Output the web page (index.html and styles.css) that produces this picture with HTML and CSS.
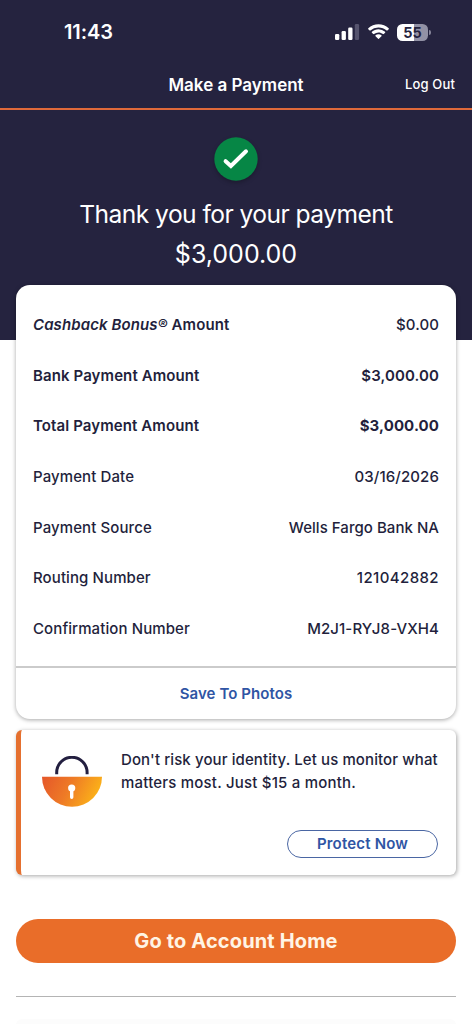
FILE: index.html
```html
<!DOCTYPE html>
<html lang="en">
<head>
<meta charset="utf-8">
<title>Make a Payment</title>
<link rel="stylesheet" href="styles.css">
</head>
<body>
<div class="screen">
  <header class="top">
    <div class="status">
      <span class="time">11:43</span>
      <div class="status-icons">
        <svg class="signal" width="25" height="16" viewBox="0 0 25 16">
          <rect x="0" y="10" width="4.3" height="6" rx="1.2" fill="#fff"/>
          <rect x="6.6" y="7" width="4.3" height="9" rx="1.2" fill="#fff"/>
          <rect x="13.2" y="3.6" width="4.3" height="12.4" rx="1.2" fill="#fff"/>
          <rect x="19.8" y="0" width="4.3" height="16" rx="1.2" fill="#56546e"/>
        </svg>
        <svg class="wifi" width="21" height="16" viewBox="0 0 22 16">
          <path d="M11 0C6.9 0 3.2 1.5.3 4.2a.6.6 0 0 0 0 .8l1.4 1.4c.2.2.5.2.8 0A12.300 12.300 0 0 1 11 3.200c3.200 0 6.200 1.200 8.500 3.200.3.200.6.200.8 0L21.700 5a.6.6 0 0 0 0-.8C18.800 1.500 15.100 0 11 0z" fill="#fff"/>
          <path d="M11 5.200c-2.600 0-5 1-6.900 2.600a.6.6 0 0 0 0 .9l1.400 1.400c.2.200.5.200.8 0A7.300 7.300 0 0 1 11 8.400c1.800 0 3.400.6 4.700 1.700.3.200.6.200.8 0l1.400-1.400a.6.6 0 0 0 0-.9A10.600 10.600 0 0 0 11 5.200z" fill="#fff"/>
          <path d="M11 10.400c-1.200 0-2.300.4-3.100 1.100a.6.6 0 0 0 0 .9l2.700 2.700c.2.300.6.300.8 0l2.700-2.700a.6.6 0 0 0 0-.9 4.900 4.900 0 0 0-3.100-1.100z" fill="#fff"/>
        </svg>
        <div class="battery"><span class="battery-level">55</span><i class="battery-cap"></i></div>
      </div>
    </div>
    <nav class="nav">
      <h1 class="nav-title">Make a Payment</h1>
      <a class="logout">Log Out</a>
    </nav>
  </header>

  <section class="hero">
    <svg class="check" width="44" height="44" viewBox="0 0 44 44">
      <circle cx="22" cy="22" r="21.700" fill="#068645"/>
      <path d="M11.600 24.200L16.900 29L32 14.300" fill="none" stroke="#fff" stroke-width="4" stroke-linecap="round" stroke-linejoin="miter"/>
    </svg>
    <p class="thanks">Thank you for your payment</p>
    <p class="total">$3,000.00</p>
  </section>

  <main class="content">
    <section class="receipt">
      <dl class="rows">
        <div class="row semi"><dt><em>Cashback Bonus®</em> Amount</dt><dd class="plain">$0.00</dd></div>
        <div class="row semi"><dt>Bank Payment Amount</dt><dd>$3,000.00</dd></div>
        <div class="row semi"><dt>Total Payment Amount</dt><dd class="strong">$3,000.00</dd></div>
        <div class="row"><dt>Payment Date</dt><dd>03/16/2026</dd></div>
        <div class="row"><dt>Payment Source</dt><dd class="bank">Wells Fargo Bank NA</dd></div>
        <div class="row"><dt>Routing Number</dt><dd class="digits">121042882</dd></div>
        <div class="row"><dt>Confirmation Number</dt><dd>M2J1-RYJ8-VXH4</dd></div>
      </dl>
      <a class="save">Save To Photos</a>
    </section>

    <section class="promo">
      <svg class="lock" width="60" height="51" viewBox="0 0 60 51">
        <defs>
          <linearGradient id="bowl" x1="0" y1="0" x2="1" y2=".25">
            <stop offset="0" stop-color="#e5572a"/>
            <stop offset=".5" stop-color="#ee7a26"/>
            <stop offset="1" stop-color="#fbb019"/>
          </linearGradient>
        </defs>
        <path d="M14.700 18.300V16.500a15.200 15.200 0 0 1 30.400 0V18.300" fill="none" stroke="#231f40" stroke-width="3"/>
        <path d="M0 20.700H60A30 30 0 0 1 0 20.700z" fill="url(#bowl)"/>
        <circle cx="29.700" cy="32" r="3.600" fill="#fff"/>
        <path d="M28 33h3.400v8.200a1.700 1.700 0 0 1-3.400 0z" fill="#fff"/>
      </svg>
      <div class="promo-body">
        <p class="promo-text">Don't risk your identity. Let us monitor what<br><span class="price-line">matters most. Just $15 a month.</span></p>
        <a class="protect">Protect Now</a>
      </div>
    </section>

    <a class="home">Go to Account Home</a>
    <hr class="rule">
    <div class="next-card"></div>
  </main>
</div>
</body>
</html>
```
FILE: styles.css
```css
* { box-sizing: border-box; }

body {
  margin: 0;
  background: #fff;
  color: #231f3c;
  font-family: Inter, "Liberation Sans", sans-serif;
  font-weight: 500;
}

h1, p, dl, dd { margin: 0; }

.screen {
  height: 1024px;
  overflow: hidden;
  background: #fff;
}

.top {
  height: 110px;
  background: #25233f;
  border-bottom: 2px solid #e0693a;
}

.status {
  height: 60px;
  padding: 4px 44px 0 64px;
  display: flex;
  align-items: center;
  justify-content: space-between;
  color: #fff;
}

.time {
  font-size: 20px;
  font-weight: 600;
  letter-spacing: -0.1px;
}

.status-icons {
  display: flex;
  align-items: center;
  gap: 8px;
}

.battery {
  position: relative;
  width: 31px;
  height: 17px;
  border-radius: 5.5px;
  background: linear-gradient(90deg, #fff 54%, #9291a5 54%);
  color: #25233f;
  font-size: 14.5px;
  font-weight: 700;
  line-height: 17px;
  text-align: center;
}

.battery-cap {
  position: absolute;
  right: -3px;
  top: 6px;
  width: 2px;
  height: 5px;
  border-radius: 0 2px 2px 0;
  background: #858399;
}

.nav {
  height: 48px;
  padding: 0 17px;
  display: grid;
  grid-template-columns: 1fr auto 1fr;
  align-items: center;
  color: #fff;
}

.nav-title {
  grid-column: 2;
  padding-top: 1px;
  font-size: 17px;
  font-weight: 600;
  line-height: 22px;
}

.logout {
  justify-self: end;
  font-size: 13px;
  letter-spacing: 0.15px;
}

.hero {
  height: 230px;
  padding-top: 27px;
  display: flex;
  flex-direction: column;
  align-items: center;
  background: #25233f;
  color: #fff;
  font-size: 25px;
  font-weight: 400;
  line-height: 40px;
}

.check {
  margin-bottom: 13px;
  filter: drop-shadow(0 2px 2px rgba(0, 0, 0, 0.25));
}

.thanks {
  font-size: 24.6px;
  letter-spacing: -0.55px;
}

.content {
  position: relative;
  margin-top: -55px;
  padding: 0 16px;
  display: flex;
  flex-direction: column;
}

.receipt {
  height: 434px;
  border-radius: 14px;
  background: #fff;
  box-shadow: 0 1px 4px rgba(0, 0, 0, 0.35);
}

.rows {
  height: 383px;
  padding: 14.4px 17px 0;
  border-bottom: 2px solid #cbcbcb;
}

.row {
  height: 50.6px;
  display: flex;
  align-items: center;
  justify-content: space-between;
  font-size: 15px;
  letter-spacing: 0.1px;
}

.semi { font-weight: 600; }
.plain { font-weight: 500; }
.strong { font-weight: 700; }
.digits { letter-spacing: 0.4px; }
.bank { letter-spacing: 0.04px; }

.save {
  height: 51px;
  display: flex;
  align-items: center;
  justify-content: center;
  color: #2f55a4;
  font-size: 15px;
  font-weight: 600;
  letter-spacing: 0.08px;
}

.promo {
  height: 145px;
  margin-top: 11px;
  padding: 18px 18px 17px 21px;
  display: flex;
  gap: 19px;
  border-left: 5px solid #e5702f;
  border-radius: 6px;
  background: #fff;
  box-shadow: 1px 1px 4px rgba(0, 0, 0, 0.35);
}

.lock {
  flex: none;
  margin-top: 7.500px;
}

.promo-body {
  flex: 1;
  min-width: 0;
  display: flex;
  flex-direction: column;
  align-items: flex-end;
  justify-content: space-between;
}

.promo-text {
  width: 100%;
  font-size: 15px;
  letter-spacing: 0.1px;
  line-height: 23px;
  white-space: nowrap;
}

.price-line { letter-spacing: 0.2px; }

.protect {
  width: 151px;
  height: 28px;
  border: 1px solid #4a66a3;
  border-radius: 14px;
  color: #2f55a4;
  font-size: 15px;
  font-weight: 600;
  letter-spacing: 0.18px;
  line-height: 26px;
  text-align: center;
}

.home {
  height: 44px;
  margin-top: 44px;
  border-radius: 22px;
  background: #e96d29;
  color: #fff4e4;
  font-size: 20px;
  font-weight: 700;
  letter-spacing: 0.14px;
  line-height: 44px;
  text-align: center;
}

.rule {
  width: 100%;
  height: 1px;
  margin: 33px 0 0;
  border: 0;
  background: #b4b4b4;
}

.next-card {
  height: 40px;
  margin-top: 22px;
  border-radius: 6px;
  background: #fcfcfc;
}
```
